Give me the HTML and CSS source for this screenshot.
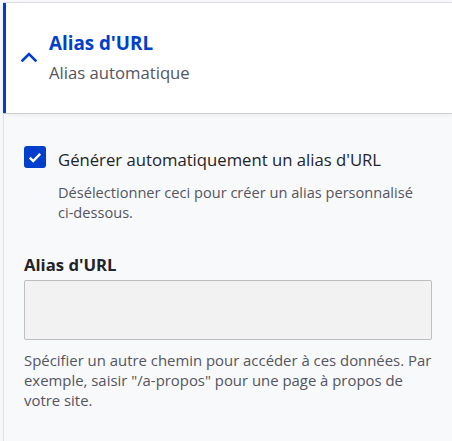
FILE: index.html
```html
<!DOCTYPE html>
<html lang="fr">
<head>
<meta charset="utf-8">
<title>Alias d'URL</title>
<link rel="stylesheet" href="styles.css">
</head>
<body>
<details class="details" open>
  <summary class="summary">
    <svg class="chevron" width="16" height="10" viewBox="0 0 16 10" aria-hidden="true"><path d="M1.5 8.5 L8 2 L14.5 8.5" fill="none" stroke="#003ecc" stroke-width="2.6" stroke-linecap="square"/></svg>
    <span class="summary-text">
      <span class="summary-title">Alias d'URL</span>
      <span class="summary-sub">Alias automatique</span>
    </span>
  </summary>
  <div class="content">
    <div class="check-item">
      <span class="checkbox">
        <svg width="14" height="11" viewBox="0 0 14 11" aria-hidden="true"><path d="M1.8 5.6 L5.2 9 L12.2 1.8" fill="none" stroke="#fff" stroke-width="2.4"/></svg>
      </span>
      <div class="check-body">
        <div class="check-label">Générer automatiquement un alias d'URL</div>
        <div class="description">Désélectionner ceci pour créer un alias personnalisé <span class="nowrap">ci-dessous.</span></div>
      </div>
    </div>
    <div class="field">
      <div class="field-label">Alias d'URL</div>
      <div class="input"></div>
      <div class="description field-desc">Spécifier un autre chemin pour accéder à ces données. Par exemple, saisir "/a-propos" pour une page à propos de votre site.</div>
    </div>
  </div>
</details>
</body>
</html>
```
FILE: styles.css
```css
* { box-sizing: border-box; }
html, body { margin: 0; padding: 0; }
body {
  background: #f7f8fa;
  font-family: "Open Sans", "Noto Sans", sans-serif;
  color: #232429;
  padding: 2px 0 0 3px;
  height: 441px;
  overflow: hidden;
}
.details {
  border-top: 1px solid #dcdde3;
  background: #f8f9fb;
}
.summary {
  list-style: none;
  display: flex;
  align-items: center;
  gap: 12px;
  height: 110px;
  padding-left: 15px;
  background: #fff;
  border-left: 3px solid #003ecc;
  box-shadow: 0 1px 0 #cfd0d5, 0 2px 5px rgba(0,0,0,0.06);
  position: relative;
  z-index: 1;
}
.summary::-webkit-details-marker { display: none; }
.chevron { display: block; flex: none; margin-top: -2px; }
.summary-text { display: flex; flex-direction: column; gap: 6px; }
.summary-title {
  font-size: 18.8px;
  line-height: 24px;
  font-weight: 700;
  color: #003ecc;
}
.summary-sub {
  font-size: 16.7px;
  line-height: 24px;
  color: #545560;
}
.content {
  border-left: 1px solid #e2e3e8;
  padding: 33px 20px 30px 20px;
  min-height: 340px;
}
.check-item { display: flex; gap: 12px; align-items: flex-start; }
.checkbox {
  flex: none;
  width: 22px;
  height: 22px;
  border-radius: 3px;
  background: #003ecc;
  display: flex;
  align-items: center;
  justify-content: center;
}
.check-body { padding-top: 1.5px; }
.check-label { font-size: 16.7px; line-height: 24px; }
.description {
  font-size: 14.6px;
  line-height: 20px;
  color: #545560;
}
.nowrap { white-space: nowrap; }
.check-item .description { margin-top: 10.5px; }
.field { margin-top: 30.5px; }
.field-label { font-size: 16.7px; line-height: 24px; font-weight: 700; }
.input {
  margin-top: 3.5px;
  height: 60px;
  background: #f2f2f2;
  border: 1px solid #bdbdc0;
  border-radius: 2px;
}
.field-desc { margin-top: 10px; font-size: 14.9px; }
```
